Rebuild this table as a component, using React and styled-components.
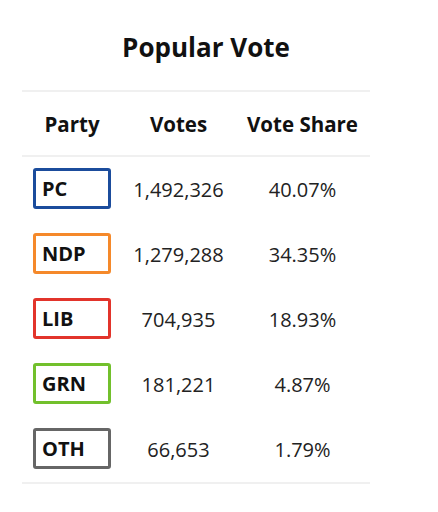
import React from "react";
import styled, { createGlobalStyle } from "styled-components";

const Global = createGlobalStyle`
  html, body { margin: 0; padding: 0; background: #fff; }
  body { font-family: "Open Sans", "Liberation Sans", sans-serif; color: #111; }
`;

const Page = styled.div`
  padding: 29px 0 0 22px;
  width: 368px;
`;

const Title = styled.h2`
  margin: 0 0 25px 0;
  text-align: center;
  font-size: 26px;
  font-weight: 700;
  line-height: 36px;
  color: #111;
`;

const Table = styled.div`
  width: 348px;
  display: grid;
  grid-template-columns: 100px 113px 135px;
  border-top: 2px solid #f0f0f0;
  border-bottom: 2px solid #f0f0f0;
`;

const HeadCell = styled.div`
  height: 63px;
  display: flex;
  align-items: center;
  justify-content: center;
  font-size: 20.5px;
  font-weight: 700;
  color: #111;
  border-bottom: 2px solid #f0f0f0;
`;

const Cell = styled.div`
  height: 65px;
  display: flex;
  align-items: center;
  justify-content: center;
  font-size: 20px;
  color: #222;
`;

const PartyBox = styled.div`
  box-sizing: border-box;
  width: 78px;
  height: 41px;
  margin-bottom: 2px;
  border: 3px solid ${(p) => p.$color};
  border-radius: 3px;
  display: flex;
  align-items: center;
  padding-left: 6px;
  font-size: 20px;
  font-weight: 700;
  color: #111;
`;

const rows = [
  { party: "PC", color: "#1b4c9c", votes: "1,492,326", share: "40.07%" },
  { party: "NDP", color: "#f5892a", votes: "1,279,288", share: "34.35%" },
  { party: "LIB", color: "#e2342b", votes: "704,935", share: "18.93%" },
  { party: "GRN", color: "#72c02c", votes: "181,221", share: "4.87%" },
  { party: "OTH", color: "#666666", votes: "66,653", share: "1.79%" },
];

export default function App() {
  return (
    <>
      <Global />
      <Page>
        <Title>Popular Vote</Title>
        <Table>
          <HeadCell>Party</HeadCell>
          <HeadCell>Votes</HeadCell>
          <HeadCell>Vote Share</HeadCell>
          {rows.map((r) => (
            <React.Fragment key={r.party}>
              <Cell>
                <PartyBox $color={r.color}>{r.party}</PartyBox>
              </Cell>
              <Cell>{r.votes}</Cell>
              <Cell>{r.share}</Cell>
            </React.Fragment>
          ))}
        </Table>
      </Page>
    </>
  );
}
